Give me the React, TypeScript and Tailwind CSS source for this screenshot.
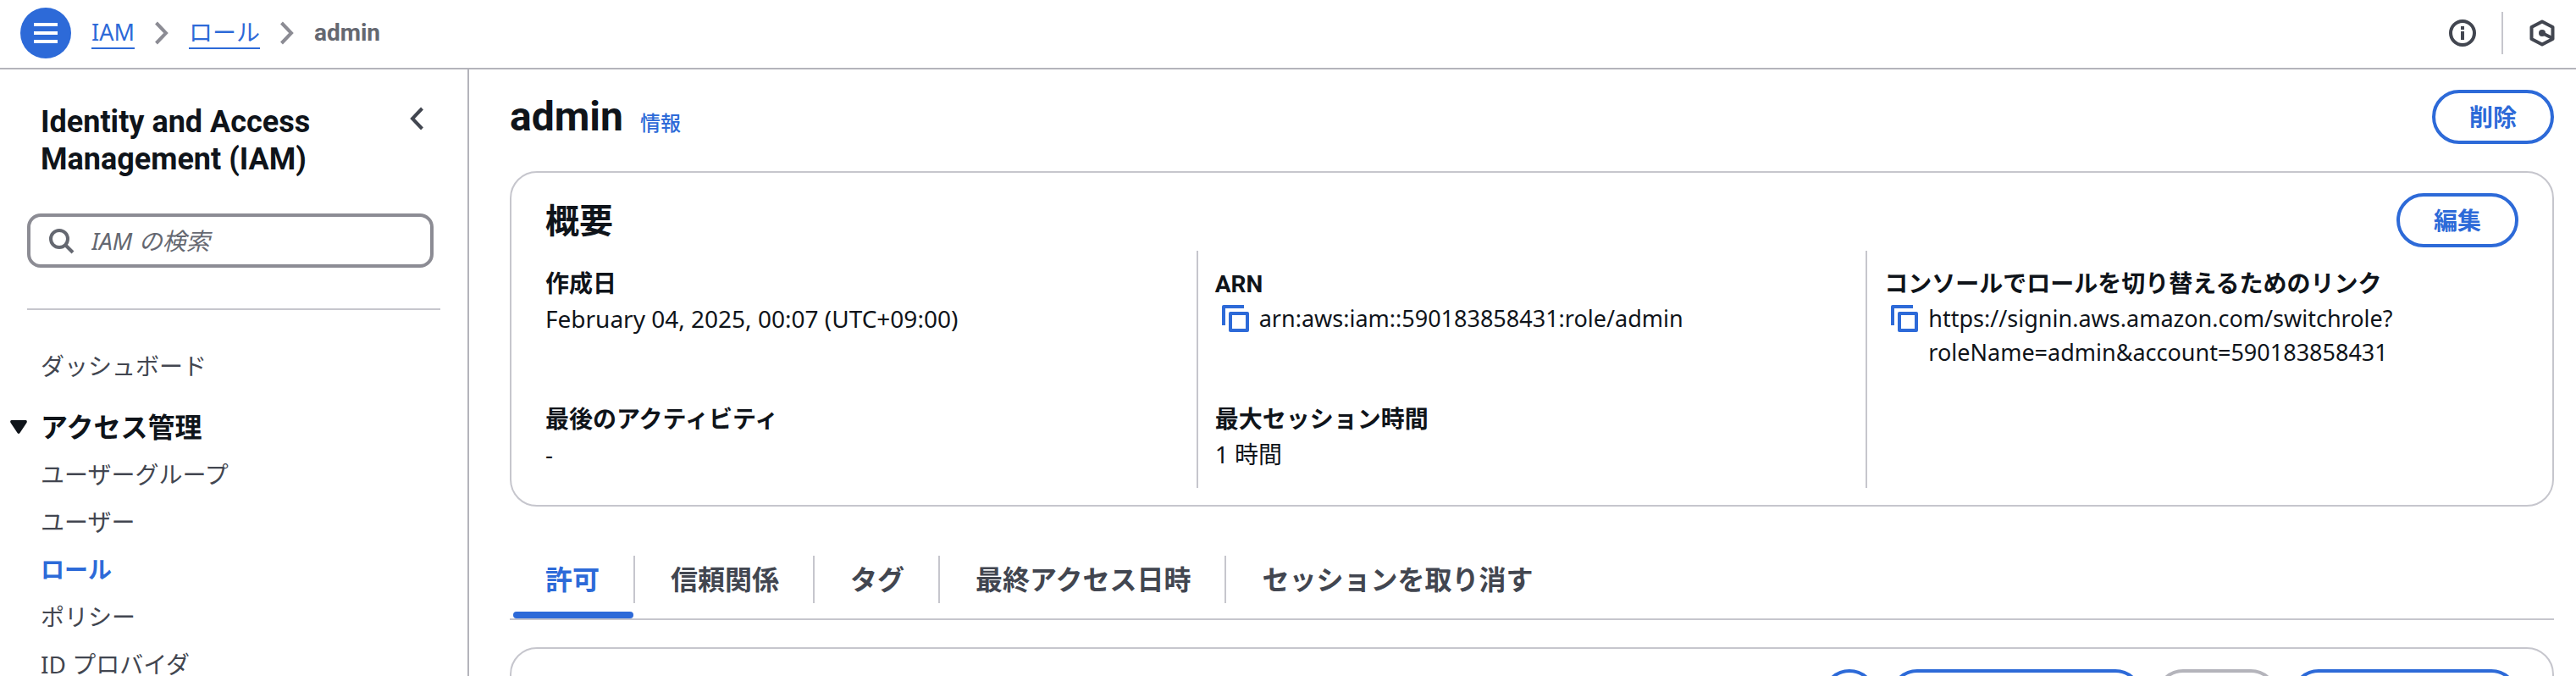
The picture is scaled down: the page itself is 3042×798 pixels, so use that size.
const navItems = [
  { label: "ユーザーグループ" },
  { label: "ユーザー" },
  { label: "ロール", active: true },
  { label: "ポリシー" },
  { label: "ID プロバイダ" },
];

const tabs = ["許可", "信頼関係", "タグ", "最終アクセス日時", "セッションを取り消す"];

function Crumb() {
  return (
    <svg width="16" height="28" viewBox="0 0 16 28" fill="none" stroke="#8c8c94" strokeWidth="4">
      <path d="M1.5 2 L13 14 L1.5 26" />
    </svg>
  );
}

function CopyButton() {
  return (
    <button aria-label="コピー" className="ml-2 mt-1 mr-3 shrink-0">
      <svg width="32" height="32" viewBox="0 0 32 32" fill="none" stroke="#2d6ad8" strokeWidth="4" strokeLinejoin="round">
        <path d="M26 2 H2 V24" />
        <rect x="10" y="10" width="20" height="20" />
      </svg>
    </button>
  );
}

function Field({ label, children }: { label: string; children: React.ReactNode }) {
  return (
    <div>
      <dt className="font-['Roboto','Noto_Sans_CJK_JP',sans-serif] font-bold">{label}</dt>
      <dd className="flex items-start">{children}</dd>
    </div>
  );
}

export default function App() {
  return (
    <div className="h-screen overflow-hidden flex flex-col bg-white text-[#0f141a] text-[28px] leading-10 font-['Noto_Sans','Noto_Sans_CJK_JP',sans-serif]">

      {/* Top bar */}
      <header className="h-[82px] shrink-0 flex items-center justify-between px-6 pb-[2px] border-b-2 border-[#b4b4bb]">
        <div className="flex items-center gap-6">
          <button aria-label="メニュー" className="w-15 h-15 rounded-full bg-[#2d6ad8]">
            <svg width="60" height="60" viewBox="0 0 60 60" stroke="#fff" strokeWidth="4">
              <path d="M16 20 H44 M16 30 H44 M16 40 H44" />
            </svg>
          </button>

          <nav className="flex items-center gap-6">
            <a href="#" className="leading-9 text-[27px] text-[#2d6ad8] border-b-2 border-[#2d6ad8]">IAM</a>
            <Crumb />
            <a href="#" className="leading-9 text-[#2d6ad8] border-b-2 border-[#2d6ad8]">ロール</a>
            <Crumb />
            <span className="font-['Roboto',sans-serif] font-bold text-[#656871]">admin</span>
          </nav>
        </div>

        <div className="flex items-center gap-[30px]">
          <button aria-label="情報">
            <svg width="32" height="32" viewBox="0 0 32 32" fill="none" stroke="#424650" strokeWidth="4">
              <circle cx="16" cy="16" r="14" />
              <path d="M16 8 V12 M16 14 V24" />
            </svg>
          </button>
          <div className="w-[2px] h-[50px] bg-[#c6c6cd]" />
          <button aria-label="診断">
            <svg width="32" height="32" viewBox="0 0 32 32" fill="none" stroke="#424650" strokeWidth="4" strokeLinejoin="round">
              <path d="M16 2.5 L28.5 9 V23 L16 29.5 L3.5 23 V9 Z" />
              <path d="M16 16 L28 22" />
              <circle cx="16" cy="16" r="4" fill="#424650" stroke="none" />
            </svg>
          </button>
        </div>
      </header>

      <div className="flex flex-1 min-h-0">

        {/* Sidebar */}
        <aside className="w-[554px] shrink-0 border-r-2 border-[#b4b4bb] pt-10 px-8 overflow-hidden">
          <div className="flex justify-between items-start pl-4 pr-5">
            <h2 className="w-[360px] font-['Roboto',sans-serif] text-[36px] leading-11 font-bold">
              Identity and Access Management (IAM)
            </h2>
            <button aria-label="閉じる" className="pt-1">
              <svg width="16" height="28" viewBox="0 0 16 28" fill="none" stroke="#424650" strokeWidth="4">
                <path d="M14.5 2 L3 14 L14.5 26" />
              </svg>
            </button>
          </div>

          <label className="mt-[42px] mr-2 h-16 flex items-center gap-5 px-5 border-4 border-[#8c8c94] rounded-2xl">
            <svg width="32" height="32" viewBox="0 0 32 32" fill="none" stroke="#656871" strokeWidth="4" className="shrink-0">
              <circle cx="14" cy="14" r="10" />
              <path d="M21 21 L30 30" />
            </svg>
            <input
              type="search"
              aria-label="IAM の検索"
              placeholder="IAM の検索"
              className="w-full outline-none placeholder:italic placeholder:text-[#656871] placeholder:opacity-100"
            />
          </label>

          <hr className="mt-12 border-t-2 border-[#c6c6cd]" />

          <nav className="mt-[46px] pl-4 text-[#424650]">
            <a href="#" className="block">ダッシュボード</a>

            <button className="mt-8 -ml-9 flex items-center gap-4 text-[32px] leading-10 font-bold text-[#0f141a]">
              <svg width="20" height="16" viewBox="0 0 20 16" fill="#0f141a">
                <path d="M1.5 0 H18.5 Q20.5 0.5 19.5 3 L11.5 15 Q10 17 8.5 15 L0.5 3 Q-0.5 0.5 1.5 0 Z" />
              </svg>
              アクセス管理
            </button>

            <ul className="mt-4 flex flex-col gap-4">
              {navItems.map((item) => (
                <li key={item.label}>
                  <a href="#" className={item.active ? "block font-bold text-[#2d6ad8]" : "block"}>
                    {item.label}
                  </a>
                </li>
              ))}
            </ul>
          </nav>
        </aside>

        {/* Content */}
        <main className="flex-1 min-w-0 pt-6 pl-12 pr-[26px] overflow-hidden">
          <div className="flex justify-between items-center">
            <div className="flex items-baseline gap-5">
              <h1 className="font-['Roboto',sans-serif] text-[48px] leading-16 font-bold">admin</h1>
              <a href="#" className="text-[24px] font-medium text-[#2d6ad8]">情報</a>
            </div>
            <button className="h-16 px-10 border-4 border-[#2d6ad8] rounded-full font-bold text-[#2d6ad8]">
              削除
            </button>
          </div>

          {/* Summary */}
          <section className="mt-8 px-10 pt-6 pb-5 border-2 border-[#c6c6cd] rounded-[32px]">
            <div className="flex justify-between items-center">
              <h2 className="text-[40px] leading-12 font-bold">概要</h2>
              <button className="h-16 px-10 border-4 border-[#2d6ad8] rounded-full font-bold text-[#2d6ad8]">
                編集
              </button>
            </div>

            <dl className="mt-1 -ml-[22px] grid grid-cols-3 gap-5">
              <div className="flex flex-col gap-20 py-5 pl-5 border-l-2 border-transparent">
                <Field label="作成日">February 04, 2025, 00:07 (UTC+09:00)</Field>
                <Field label="最後のアクティビティ">-</Field>
              </div>

              <div className="flex flex-col gap-20 py-5 pl-5 border-l-2 border-[#c6c6cd]">
                <Field label="ARN">
                  <CopyButton />
                  <span className="text-[27px]">arn:aws:iam::590183858431:role/admin</span>
                </Field>
                <Field label="最大セッション時間">1 時間</Field>
              </div>

              <div className="flex flex-col gap-20 py-5 pl-5 border-l-2 border-[#c6c6cd]">
                <Field label="コンソールでロールを切り替えるためのリンク">
                  <CopyButton />
                  <span className="text-[27px]">
                    https://signin.aws.amazon.com/switchrole?
                    <br />
                    roleName=admin&amp;account=590183858431
                  </span>
                </Field>
              </div>
            </dl>
          </section>

          {/* Tabs */}
          <div role="tablist" className="mt-[58px] pb-[18px] flex border-b-2 border-[#c6c6cd]">
            {tabs.map((tab, i) => (
              <button
                key={tab}
                role="tab"
                aria-selected={i === 0}
                className={
                  "relative h-14 pl-[42px] pr-10 border-r-2 border-[#c6c6cd] last:border-r-0 text-[32px] font-bold " +
                  (i === 0 ? "text-[#2d6ad8]" : "text-[#424650]")
                }
              >
                {tab}
                {i === 0 && (
                  <span className="absolute left-1 right-0 -bottom-[18px] h-2 rounded bg-[#2d6ad8]" />
                )}
              </button>
            ))}
          </div>

          {/* Permission policies */}
          <section className="mt-8 px-10 pt-6 pb-5 border-2 border-[#c6c6cd] rounded-[32px]">
            <div className="flex justify-end gap-4 font-bold text-[#2d6ad8]">
              <button aria-label="更新" className="w-16 h-16 border-4 border-[#2d6ad8] rounded-full" />
              <button aria-label="シミュレート" className="w-[298px] h-16 border-4 border-[#2d6ad8] rounded-full" />
              <button aria-label="削除" disabled className="w-36 h-16 border-4 border-[#b4b4bb] rounded-full" />
              <button aria-label="許可を追加" className="w-[268px] h-16 border-4 border-[#2d6ad8] rounded-full" />
            </div>
          </section>
        </main>
      </div>
    </div>
  );
}
